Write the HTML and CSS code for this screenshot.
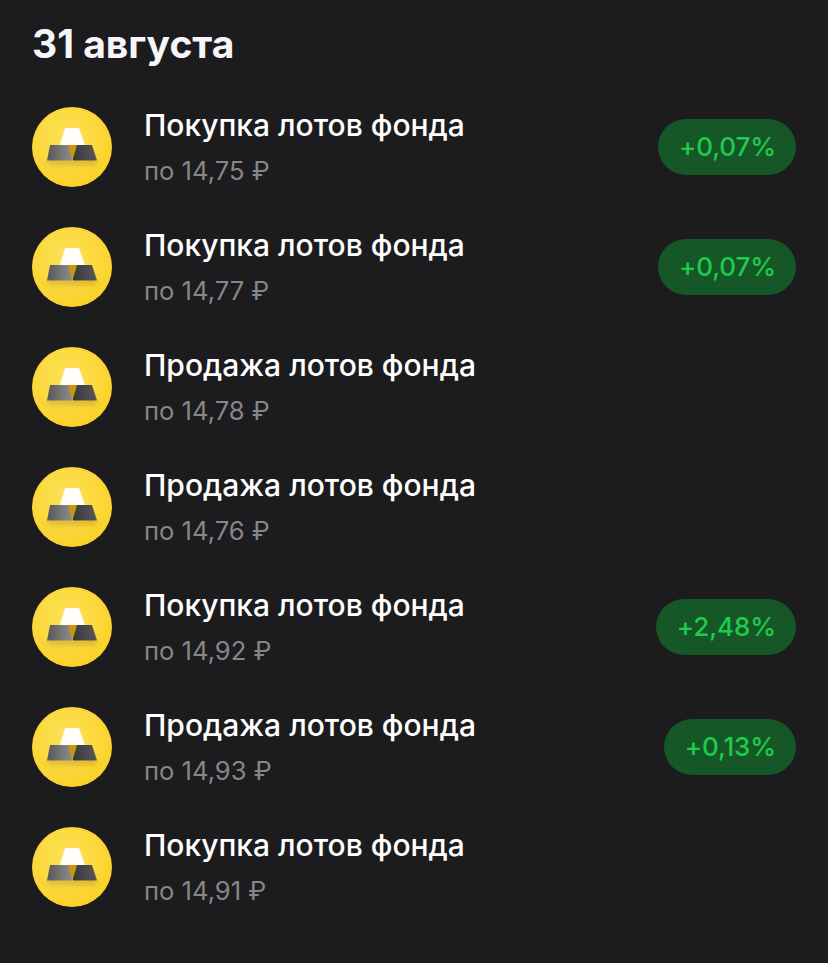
FILE: index.html
```html
<!DOCTYPE html>
<html>
    <head>
        <meta http-equiv="Content-Type" content="text/html; charset=UTF-8" />
        <title>31 августа</title>
        <link rel="stylesheet" href="styles.css">
    </head>
    <body>
        <svg class="defs" width="0" height="0">
            <defs>
                <radialGradient id="coin" cx="0.42" cy="0.38" r="0.7">
                    <stop offset="0" stop-color="#fde25a"/>
                    <stop offset="1" stop-color="#fad024"/>
                </radialGradient>
                <linearGradient id="barLeft" x1="0" y1="0" x2="1" y2="0">
                    <stop offset="0" stop-color="#58585a"/>
                    <stop offset="1" stop-color="#8c8c8c"/>
                </linearGradient>
                <linearGradient id="barRight" x1="0" y1="0" x2="1" y2="0">
                    <stop offset="0" stop-color="#38383a"/>
                    <stop offset="1" stop-color="#59595b"/>
                </linearGradient>
                <filter id="blur" x="-30%" y="-100%" width="160%" height="300%">
                    <feGaussianBlur stdDeviation="2.500"/>
                </filter>
                <symbol id="gold" viewBox="0 0 80 80">
                    <circle cx="40" cy="40" r="40" fill="url(#coin)"/>
                    <rect x="16" y="52" width="48" height="6" fill="#a8871a" opacity="0.4" filter="url(#blur)"/>
                    <path d="M33 21h14l6 17h-25z" fill="#fffefa"/>
                    <path d="M35.500 38h10l-5 15.500z" fill="#c9960f"/>
                    <path d="M18 38h18l4 13.500v2h-25z" fill="url(#barLeft)"/>
                    <path d="M45 38h15l5 15.500h-24v-2z" fill="url(#barRight)"/>
                </symbol>
            </defs>
        </svg>

        <h1 class="date">31 августа</h1>

        <div class="list">
            <div class="row">
                <svg class="icon"><use href="#gold"/></svg>
                <div class="info">
                    <div class="name">Покупка лотов фонда</div>
                    <div class="price">по 14,75 ₽</div>
                </div>
                <span class="pill">+0,07%</span>
            </div>
            <div class="row">
                <svg class="icon"><use href="#gold"/></svg>
                <div class="info">
                    <div class="name">Покупка лотов фонда</div>
                    <div class="price">по 14,77 ₽</div>
                </div>
                <span class="pill">+0,07%</span>
            </div>
            <div class="row">
                <svg class="icon"><use href="#gold"/></svg>
                <div class="info">
                    <div class="name">Продажа лотов фонда</div>
                    <div class="price">по 14,78 ₽</div>
                </div>
            </div>
            <div class="row">
                <svg class="icon"><use href="#gold"/></svg>
                <div class="info">
                    <div class="name">Продажа лотов фонда</div>
                    <div class="price">по 14,76 ₽</div>
                </div>
            </div>
            <div class="row">
                <svg class="icon"><use href="#gold"/></svg>
                <div class="info">
                    <div class="name">Покупка лотов фонда</div>
                    <div class="price">по 14,92 ₽</div>
                </div>
                <span class="pill">+2,48%</span>
            </div>
            <div class="row">
                <svg class="icon"><use href="#gold"/></svg>
                <div class="info">
                    <div class="name">Продажа лотов фонда</div>
                    <div class="price">по 14,93 ₽</div>
                </div>
                <span class="pill">+0,13%</span>
            </div>
            <div class="row">
                <svg class="icon"><use href="#gold"/></svg>
                <div class="info">
                    <div class="name">Покупка лотов фонда</div>
                    <div class="price">по 14,91 ₽</div>
                </div>
            </div>
        </div>
    </body>
</html>
```

FILE: styles.css
```css
body {
    margin: 0;
    background: #1c1c1e;
    color: #fff;
    font-family: Inter, "Noto Sans", sans-serif;
}
.defs {
    display: block;
}
.date {
    margin: 0;
    padding: 0 32px;
    height: 87px;
    line-height: 87px;
    font-size: 39px;
    font-weight: 700;
    color: #f6f6f8;
}
.row {
    display: flex;
    align-items: center;
    height: 120px;
    padding: 0 32px;
}
.icon {
    width: 80px;
    height: 80px;
    flex: none;
    margin-right: 32px;
}
.info {
    flex: 1;
}
.name {
    font-size: 30px;
    font-weight: 500;
    line-height: 40px;
}
.price {
    font-size: 25.6px;
    line-height: 36px;
    margin-top: 8px;
    color: #86868a;
}
.pill {
    height: 56px;
    line-height: 56px;
    padding: 0 20px 0 21px;
    border-radius: 28px;
    background: #155726;
    color: #1ecb4c;
    font-size: 26px;
    font-weight: 500;
    letter-spacing: -0.1px;
}
```
